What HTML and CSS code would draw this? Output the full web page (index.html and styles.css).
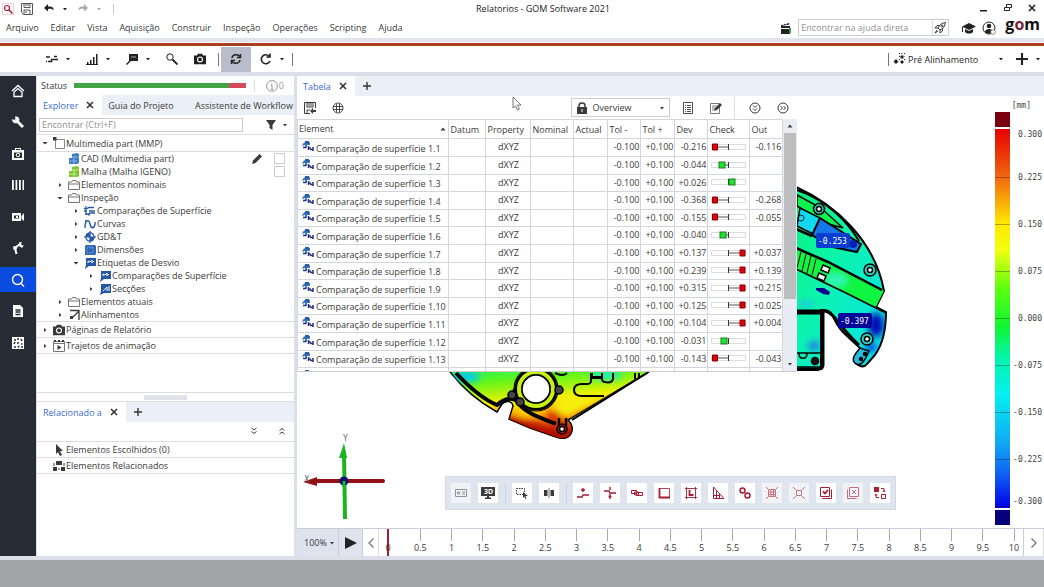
FILE: index.html
```html
<!DOCTYPE html>
<html lang="pt">
<head>
  <meta charset="UTF-8">
  <meta name="viewport" content="width=device-width, initial-scale=1.0">
  <title>Relatorios - GOM Software 2021</title>
  <link rel="stylesheet" href="styles.css">
</head>
<body>
  <!-- Shared icons -->
  <svg class="sprite" aria-hidden="true">
    <symbol id="caret" viewBox="0 0 6 6"><path d="M1 2h4L3 4.6z"/></symbol>
    <symbol id="caret-up" viewBox="0 0 6 6"><path d="M.5 4.5h5L3 1.5z"/></symbol>
    <symbol id="closed" viewBox="0 0 6 6"><path d="M2 1v4l2.500-2z"/></symbol>
    <symbol id="open" viewBox="0 0 6 6"><path d="M.5 2h5L3 4.500z"/></symbol>
    <symbol id="close" viewBox="0 0 8 8"><path d="M1 1l6 6M7 1L1 7" fill="none" stroke="currentColor" stroke-width="1.600"/></symbol>
    <symbol id="plus" viewBox="0 0 8 8"><path d="M4 0v8M0 4h8" fill="none" stroke="currentColor" stroke-width="1.400"/></symbol>
    <symbol id="camera" viewBox="0 0 14 12"><path d="M0 2h3.500l1-2h5l1 2H14v10H0z"/><circle cx="7" cy="6.500" r="2.900" fill="none" stroke="#fff" stroke-width="1.300"/></symbol>
    <symbol id="folder" viewBox="0 0 12 11"><path d="M.5 10V2.500h3l1-1.500H8l.5 1.500h3V10zM1 4.500h10" fill="none" stroke="#777"/></symbol>
    <symbol id="flag" viewBox="0 0 12 12"><path d="M2 1h10v8H5l-4 3 1-4z"/><path d="M4 6V4l2 1 2-2v3l2-2" fill="none" stroke="#fff"/></symbol>
    <symbol id="surf" viewBox="0 0 12 10"><path d="M0 2.500h3l2-1h5M0 5h3M5 5h6M1 8h4l1-1h5" fill="none" stroke="#2457a8" stroke-width="1.300"/><path d="M2 0v9M5 7v3" stroke="#2457a8" fill="none"/></symbol>
    <symbol id="comp" viewBox="0 0 12 11"><path d="M0 5c1-3 2-4 4-4h4v3H5v3H3V4z" fill="#3f79bd"/><path d="M3 0h4v3H3z" fill="#2c5fa6"/><path d="M1 6.500h3M6 7h2l1 1.500h2M6.500 5v4M11 6v4" fill="none" stroke="#25307f" stroke-width="1.500"/></symbol>
    <symbol id="lock" viewBox="0 0 10 12"><path d="M0 5h10v7H0z"/><path d="M2 5V3.500C2 0 8 0 8 3.500V5" fill="none" stroke="currentColor" stroke-width="1.500"/><path d="M5 7v3" stroke="#fff"/></symbol>
    <symbol id="range" viewBox="0 0 35 8"><path d="M.5 1.500h34v5H.5z" fill="#fff" stroke="#ddd"/><path d="M17.500 1v6" stroke="#333"/></symbol>
    <symbol id="low" viewBox="0 0 35 8"><use href="#range"/><path d="M4 4h13.500" stroke="#555"/><path d="M1.500 1h5v6h-5z" fill="#e00010" stroke="#800"/></symbol>
    <symbol id="high" viewBox="0 0 35 8"><use href="#range"/><path d="M17.500 4H30" stroke="#555"/><path d="M29 1h5v6h-5z" fill="#e00010" stroke="#800"/></symbol>
  </svg>

  <header>
    <div class="titlebar">
      <svg class="app-icon" viewBox="0 0 12 12"><path d="M.5.5h11v11H.5z" fill="none" stroke="#e3a3ad" stroke-dasharray="1 1"/><circle cx="5" cy="5" r="2.500" fill="none" stroke="#a61c35" stroke-width="1.200"/><path d="M7 7l3.500 3.500" stroke="#a61c35" stroke-width="1.500"/></svg>
      <button class="icon-btn save" aria-label="Salvar"><svg viewBox="0 0 12 12" fill="none" stroke="currentColor"><path d="M.5.5h11v11h-9l-2-2zM3 .5v4h6v-4M3 11V7h6v4.500M5 8v2M5 1v2M7 1v2"/></svg></button>
      <button class="icon-btn" aria-label="Desfazer"><svg viewBox="0 0 12 12"><path d="M1 5l4-4v2.500c4-.5 6 1 5.500 4C9 5.500 7.500 5.500 5 6v2.500z"/></svg></button>
      <button class="caret-btn" aria-label="Histórico"><svg><use href="#caret"/></svg></button>
      <button class="icon-btn redo" aria-label="Refazer"><svg viewBox="0 0 12 12"><path d="M11 5L7 1v2.500c-4-.5-6 1-5.500 4C3 5.500 4.500 5.500 7 6v2.500z"/></svg></button>
      <button class="caret-btn redo" aria-label="Histórico de refazer"><svg><use href="#caret"/></svg></button>
      <span class="sep"></span>
      <h1>Relatorios - GOM Software 2021</h1>
      <div class="window-btns">
        <button aria-label="Minimizar"><svg viewBox="0 0 8 8"><path d="M0 6h7v1.500H0z"/></svg></button>
        <button aria-label="Restaurar"><svg viewBox="0 0 8 8" fill="none" stroke="currentColor"><path d="M2.500 3V.5h5v3H6M.5 3.500h5v3h-5z"/></svg></button>
        <button aria-label="Fechar"><svg><use href="#close"/></svg></button>
      </div>
    </div>

    <div class="menubar">
      <nav class="menu">
        <a href="#">Arquivo</a>
        <a href="#">Editar</a>
        <a href="#">Vista</a>
        <a href="#">Aquisição</a>
        <a href="#">Construir</a>
        <a href="#">Inspeção</a>
        <a href="#">Operações</a>
        <a href="#">Scripting</a>
        <a href="#">Ajuda</a>
      </nav>
      <button class="icon-btn" aria-label="Novidades"><svg viewBox="0 0 12 12"><path d="M1 4h9v8H1zM1 3l8-2 .5 1.500L1 4z"/><path d="M3 3L4 1.500M6 2.500l1-2M1 6.500h8" stroke="#fff"/><path d="M9 6h2v5H9z" fill="#3c9b4c"/></svg></button>
      <div class="help-search">
        <input type="text" aria-label="Encontrar na ajuda direta" placeholder="Encontrar na ajuda direta">
        <button aria-label="Buscar ajuda"><svg viewBox="0 0 12 12" fill="none" stroke="currentColor"><path d="M4 6c1-3 4-5 7.500-5.500C11 4 9 7 6 8zM4 6H1l2-2.500h2M6 8v3l2.500-2V7M3 8l-2 3 3-2"/><circle cx="8" cy="4" r="1"/></svg></button>
      </div>
      <button class="icon-btn wide" aria-label="Treinamento"><svg viewBox="0 0 14 12"><path d="M7 1l7 3.500L7 8 0 4.500zM3 7l4 2 4-2v3c-2 2-6 2-8 0zM0 5h1v5H0z"/></svg></button>
      <button class="icon-btn user" aria-label="Usuário"><svg viewBox="0 0 14 14"><circle cx="7" cy="7" r="6" fill="none" stroke="currentColor"/><circle cx="7" cy="5" r="2.300"/><path d="M3 11c0-4 8-4 8 0-2 2-6 2-8 0z"/><circle cx="11" cy="11" r="2.300" fill="#fff" stroke="#777" stroke-width=".8"/></svg></button>
      <span class="logo">g<i>o</i>m</span>
    </div>
  </header>

  <div class="toolbar">
    <button class="icon-btn" aria-label="Comparação"><svg viewBox="0 0 12 12" fill="none" stroke="currentColor" stroke-width="1.500"><path d="M0 4h4M2 8.500h3.500V6.500H12M8 3.500h3M0 8.500h1"/></svg></button>
    <button class="caret-btn" aria-label="Mais comparações"><svg><use href="#caret"/></svg></button>
    <button class="icon-btn" aria-label="Diagrama"><svg viewBox="0 0 12 12"><path d="M1 9h1.500v2H1zM4 7h1.500v4H4zM7 4h1.500v7H7zM10 1h1.500v10H10zM0 11h12v1H0z"/></svg></button>
    <button class="caret-btn" aria-label="Mais diagramas"><svg><use href="#caret"/></svg></button>
    <button class="icon-btn" aria-label="Etiqueta"><svg viewBox="0 0 12 12"><path d="M3 1h9v7H5l-4 4-1-1 3-3z"/><path d="M5 4h5" stroke="#aaa"/></svg></button>
    <button class="caret-btn" aria-label="Mais etiquetas"><svg><use href="#caret"/></svg></button>
    <button class="icon-btn" aria-label="Lupa"><svg viewBox="0 0 12 12" fill="none" stroke="currentColor"><circle cx="4" cy="4" r="3.200"/><path d="M6.500 6.500l5 5" stroke-width="1.900"/></svg></button>
    <button class="icon-btn" aria-label="Captura"><svg><use href="#camera"/></svg></button>
    <span class="sep"></span>
    <button class="icon-btn active" aria-label="Recalcular"><svg viewBox="0 0 12 12" fill="none" stroke="currentColor" stroke-width="1.500"><path d="M2 5c.5-3.500 5.500-4.500 8-1.500M10 7c-.5 3.500-5.500 4.500-8 1.500"/><path d="M10.500 1v3.500H7M1.500 11V7.500H5"/></svg></button>
    <button class="icon-btn" aria-label="Recalcular projeto"><svg viewBox="0 0 12 12" fill="none" stroke="currentColor" stroke-width="1.600"><path d="M10 8A4.500 4.500 0 1 1 9 3M10 .5V4H6.500"/></svg></button>
    <button class="caret-btn" aria-label="Mais opções"><svg><use href="#caret"/></svg></button>
    <span class="sep"></span>
    <div class="alignment">
      <span class="sep"></span>
      <svg class="align-icon" viewBox="0 0 12 12"><path d="M3 6l2.500 2.500L3 11 .5 8.500zM9 7l2 2-2 2-2-2zM7.500 2.500h3v3h-3z"/><path d="M6 .5h1M8.500.5h1M11 .5h1M6 3.500h1M11.500 3.500h.5M6 6.500h1M11 6.500h1" stroke="currentColor"/></svg>
      <button class="align-name">Pré Alinhamento <svg><use href="#caret"/></svg></button>
      <button class="icon-btn add" aria-label="Novo alinhamento"><svg><use href="#plus"/></svg></button>
      <button class="caret-btn" aria-label="Mais alinhamentos"><svg><use href="#caret"/></svg></button>
    </div>
  </div>

  <main>
    <nav class="sidebar">
      <a href="#" aria-label="Início"><svg viewBox="0 0 14 14" fill="none" stroke="currentColor" stroke-width="1.300"><path d="M1 7l6-5.500L13 7M3 8l4-3.500L11 8v4.500H3z"/></svg></a>
      <a href="#" aria-label="Configuração"><svg viewBox="0 0 14 14"><path d="M1 4l2 1 1.500-1L4 1.500C8 1 9 4 8 6l5 5-2 2-5-5C3 9 1 7 1 4z"/></svg></a>
      <a href="#" aria-label="Aquisição"><svg viewBox="0 0 14 14"><path d="M1 3h3V1h6v2h3v10H1z"/><path d="M3 5.500h8v5.500H3z" fill="#262c33"/><circle cx="7" cy="8" r="1.800" fill="none" stroke="#fff"/><path d="M5 2.500h4" stroke="#262c33"/></svg></a>
      <a href="#" aria-label="Séries"><svg viewBox="0 0 14 14"><path d="M1 2h1.800v10H1zM4.500 2h1.800v10H4.500zM8 2h1.800v10H8zM11.500 2h1.500v10h-1.500z"/></svg></a>
      <a href="#" aria-label="Vídeo"><svg viewBox="0 0 14 14"><path d="M1 3h9v8H1zM10.500 6L13 3v8l-2.500-2z"/><path d="M3 5.500h5v3H3z" fill="#262c33"/><path d="M5 6h2v2H5z"/></svg></a>
      <a href="#" aria-label="Robô"><svg viewBox="0 0 14 14"><circle cx="4" cy="7" r="2"/><path d="M4 7l5-4M4 7l1.500 6" stroke="currentColor" stroke-width="2"/><path d="M8 1.500l3-.5-1 2 1 1.500 2-.5-2 3-3-2z"/></svg></a>
      <a href="#" class="current" aria-label="Inspeção"><svg viewBox="0 0 14 14" fill="none" stroke="currentColor" stroke-width="1.400"><circle cx="6.500" cy="6.500" r="5"/><path d="M9.500 10l3.500 3.500"/></svg></a>
      <a href="#" aria-label="Relatório"><svg viewBox="0 0 14 14"><path d="M2 1h7l3 3v9H2z"/><path d="M4.500 6h5M4.500 8h5M4.500 10.500h5" stroke="#262c33" stroke-width="1.300"/></svg></a>
      <a href="#" aria-label="Pontos"><svg viewBox="0 0 14 14"><path d="M1 1h12v12H1z"/><path d="M3 4h2M6 3h2M10 3l1 2M3 8l1-2M6 7h2M10 8h1.500M3 11h2M7 10l1 1.500M10 11h2" stroke="#262c33" stroke-width="1.600"/></svg></a>
    </nav>

    <aside class="explorer">
      <div class="status">
        <span>Status</span>
        <span class="progress"></span>
        <span class="messages"><svg viewBox="0 0 12 12" fill="none" stroke="currentColor"><circle cx="6" cy="6" r="5.400"/><path d="M6 5v4.500M4.500 5H6M4.500 9.500h3M6 2.500v1"/></svg>0</span>
      </div>
      <div class="tabs">
        <button class="tab selected">Explorer <svg><use href="#close"/></svg></button>
        <button class="tab">Guia do Projeto</button>
        <button class="tab last">Assistente de Workflow</button>
      </div>
      <div class="find">
        <input type="text" aria-label="Encontrar" placeholder="Encontrar (Ctrl+F)">
        <button aria-label="Filtro"><svg class="funnel" viewBox="0 0 10 10"><path d="M0 0h10L6.500 5v5l-3-2V5z"/></svg><svg><use href="#caret"/></svg></button>
      </div>
      <ul class="tree">
        <li class="root"><svg class="twisty"><use href="#open"/></svg><svg viewBox="0 0 12 12"><path d="M2.500 2.500h9v9h-9z" fill="none" stroke="#888"/><path d="M0 0h3.500v3.500H0z"/></svg>Multimedia part (MMP)</li>
        <li class="l1"><svg class="twisty"></svg><svg viewBox="0 0 12 12"><path d="M4 1l5-1 2 1v9l-2 1H1V5h3z" fill="#3c7cc9"/><path d="M1 8h8M6 3v8M4 4h7" stroke="#84b2e5" fill="none"/></svg>CAD (Multimedia part)
          <svg class="pencil" viewBox="0 0 10 10"><path d="M0 10l1-3.500L7.500 0 10 2.500 3.500 9z"/></svg><input type="checkbox" aria-label="CAD (Multimedia part)"></li>
        <li class="l1"><svg class="twisty"></svg><svg viewBox="0 0 12 12"><path d="M4 1l5-1 2 1v9l-2 1H1V5h3z" fill="#7cc62d"/><path d="M1 8h8M6 3v8M4 4h7" stroke="#c4ee8c" fill="none"/></svg>Malha (Malha IGENO)<input type="checkbox" aria-label="Malha (Malha IGENO)"></li>
        <li class="l1"><svg class="twisty"><use href="#closed"/></svg><svg><use href="#folder"/></svg>Elementos nominais</li>
        <li class="l1"><svg class="twisty"><use href="#open"/></svg><svg><use href="#folder"/></svg>Inspeção</li>
        <li class="l2"><svg class="twisty"><use href="#closed"/></svg><svg><use href="#surf"/></svg>Comparações de Superfície</li>
        <li class="l2"><svg class="twisty"><use href="#closed"/></svg><svg viewBox="0 0 12 12" fill="none" stroke="#2457a8" stroke-width="1.400"><path d="M1 10c0-9 4-9 5-4s4 5 5 0V4M1 3h2"/></svg>Curvas</li>
        <li class="l2"><svg class="twisty"><use href="#closed"/></svg><svg viewBox="0 0 12 12" fill="none" stroke="#2457a8" stroke-width="1.200"><circle cx="6" cy="6" r="4.200"/><path d="M6 0v12M0 6h12"/><path d="M6 2v4H2c0-3 2-4 4-4zM6 10V6h4c0 3-2 4-4 4z" fill="#2457a8" stroke="none"/></svg>GD&amp;T</li>
        <li class="l2"><svg class="twisty"><use href="#closed"/></svg><svg viewBox="0 0 12 12"><path d="M2 1h9l1 1v8l-1 1H1V2z" fill="#2d66b5"/><path d="M3 3h6v6H3zM7 3v2" fill="none" stroke="#5c8fd0"/></svg>Dimensões</li>
        <li class="l2"><svg class="twisty"><use href="#open"/></svg><svg class="blue"><use href="#flag"/></svg>Etiquetas de Desvio</li>
        <li class="l3"><svg class="twisty"><use href="#closed"/></svg><svg class="blue"><use href="#flag"/></svg>Comparações de Superfície</li>
        <li class="l3"><svg class="twisty"><use href="#closed"/></svg><svg class="blue" viewBox="0 0 12 12"><path d="M2 1h10v9H5l-4 2 1-4z"/><path d="M4 8l4-4v4M10 3v5" fill="none" stroke="#fff"/></svg>Secções</li>
        <li class="l1"><svg class="twisty"><use href="#closed"/></svg><svg><use href="#folder"/></svg>Elementos atuais</li>
        <li class="l1"><svg class="twisty"><use href="#closed"/></svg><svg viewBox="0 0 12 12"><path d="M2 1.500h9V11M11 2L5 8" fill="none" stroke="currentColor" stroke-width="1.300"/><path d="M2 7h3v3H2z"/></svg>Alinhamentos</li>
        <li class="group"><svg class="twisty"><use href="#closed"/></svg><svg><use href="#camera"/></svg>Páginas de Relatório</li>
        <li class="group"><svg class="twisty"><use href="#closed"/></svg><svg viewBox="0 0 12 12"><path d="M.5 1.500h11v10H.5zM0 3.500h12" fill="none" stroke="#777"/><path d="M1 0h2v2H1zM5 0h2v2H5zM9 0h2v2H9zM4.500 5l4 2.500-4 2.500z"/></svg>Trajetos de animação</li>
      </ul>
      <div class="splitter"><span></span></div>
      <div class="tabs">
        <button class="tab selected">Relacionado a <svg><use href="#close"/></svg></button>
        <button class="tab-add" aria-label="Nova aba"><svg><use href="#plus"/></svg></button>
      </div>
      <div class="related-tools">
        <button aria-label="Expandir"><svg viewBox="0 0 8 8" fill="none" stroke="currentColor"><path d="M1.500 1L4 3l2.500-2M1.500 4.500L4 6.500l2.500-2"/></svg></button>
        <button aria-label="Recolher"><svg viewBox="0 0 8 8" fill="none" stroke="currentColor"><path d="M1.500 3.500L4 1.500l2.500 2M1.500 7L4 5l2.500 2"/></svg></button>
      </div>
      <ul class="tree related">
        <li class="group"><svg class="twisty"></svg><svg viewBox="0 0 12 12"><path d="M3 0l7 7H7l2 4-2 1-2-4-2 2z"/></svg>Elementos Escolhidos (0)</li>
        <li class="group"><svg class="twisty"></svg><svg viewBox="0 0 12 12"><path d="M3 1h6v4H3zM0 7h4v4H0zM8 7h4v4H8z"/><path d="M1 6V3M11 6V3M5 9h2" stroke="currentColor"/></svg>Elementos Relacionados</li>
      </ul>
    </aside>

    <section class="workspace">
      <div class="tabs">
        <button class="tab selected">Tabela <svg><use href="#close"/></svg></button>
        <button class="tab-add" aria-label="Nova aba"><svg><use href="#plus"/></svg></button>
      </div>

      <div class="viewport">
        <svg class="scene" viewBox="297 96 747 432" preserveAspectRatio="xMinYMin meet">
          <defs>
            <linearGradient id="lower" x1="0" y1="0" x2=".25" y2="1">
              <stop offset="0" stop-color="#00f59c"/>
              <stop offset=".3" stop-color="#5cf51c"/>
              <stop offset=".58" stop-color="#f2f200"/>
              <stop offset=".75" stop-color="#ff9d00"/>
              <stop offset="1" stop-color="#c81400"/>
            </linearGradient>
            <linearGradient id="upper" x1="0" y1="0" x2="1" y2="1">
              <stop offset="0" stop-color="#08ee70"/>
              <stop offset=".45" stop-color="#0cf5a8"/>
              <stop offset="1" stop-color="#05dff5"/>
            </linearGradient>
            <filter id="soft" x="-50%" y="-50%" width="200%" height="200%"><feGaussianBlur stdDeviation="3"/></filter>
            <clipPath id="lowerClip"><path d="M440 360l11 13c14 18 28 29 46 39l5-8c5-4 10-3 11 2l-4 13 21 9 26 9c8 3 14 1 16-6 1-4-1-8-4-11l79-47 20-13z"/></clipPath>
            <clipPath id="upperClip"><path d="M780 180l16 7c38 17 79 53 88 104l-8 16 10 5c0 20-4 33-11 43l-8 9c-4 5-12 1-12-5l6-10-14-13c-11-9-13-19-16-23-2-3-6-3-10-3v55c0 3-2 5-5 5h-26z"/></clipPath>
          </defs>

          <!-- Lower half of the part -->
          <g stroke="#000" fill="none" stroke-width="1.500">
            <path d="M440 360l11 13c14 18 28 29 46 39l5-8c5-4 10-3 11 2l-4 13 21 9 26 9c8 3 14 1 16-6 1-4-1-8-4-11l79-47 20-13z" fill="url(#lower)"/>
            <g clip-path="url(#lowerClip)" stroke="none">
              <g filter="url(#soft)">
                <ellipse cx="466" cy="377" rx="14" ry="5" fill="#00c8f5"/>
                <ellipse cx="606" cy="375" rx="16" ry="5" fill="#12efb6"/>
                <path d="M508 416l64 18-3 10-64-19z" fill="#b01000"/>
                <path d="M546 412l12-2 6 16-16-4z" fill="#d83000"/>
                <path d="M515 408l20-2 10 6-22 4z" fill="#ffe000"/>
                <path d="M562 395l30 0 20-6-44 28-16-8z" fill="#f4ee10"/>
              </g>
            </g>
            <path d="M456 373c14 15 29 27 41 32 7-6 16-9 21-3 4 9 20 15 38 22" stroke-width="4"/>
            <circle cx="536" cy="389" r="22" stroke-width="1.200"/>
            <circle cx="536" cy="389" r="18" stroke-width="7"/>
            <circle cx="536" cy="389" r="17" stroke="#c8ef12" stroke-width="4"/>
            <circle cx="536" cy="389" r="14" fill="#fff"/>
            <path d="M572 420l75-47M604 396h-22c-5 0-8-2-8-6s3-6 8-6h5c4 0 4-2 4-5v-6M602 373v6c0 4 10 5 11 0v-6M592 378h10M635 373v6M639 373v4" stroke-width="2"/>
            <path d="M592 373v4h10v-4M555 373c6 3 10 2 12 0" stroke-width="2"/>
            <g fill="#444"><circle cx="512" cy="395" r="4"/><circle cx="520" cy="402" r="4"/><circle cx="559" cy="390" r="4"/></g>
            <path d="M516 388l-3 4M514 399l3 1" stroke-width="3"/>
            <path d="M559 418v8M566 418v8" stroke-width="2.500"/>
            <circle cx="562" cy="429" r="5" fill="#b21a10"/><circle cx="562" cy="429" r="2.500" fill="#fff"/>
          </g>

          <!-- Upper half of the part -->
          <g stroke="#000" fill="none" stroke-width="1.500">
            <path d="M780 180l16 7c38 17 79 53 88 104l-8 16 10 5c0 20-4 33-11 43l-8 9c-4 5-12 1-12-5l6-10-14-13c-11-9-13-19-16-23-2-3-6-3-10-3v55c0 3-2 5-5 5h-26z" fill="url(#upper)" stroke-width="2"/>
            <g clip-path="url(#upperClip)" stroke="none">
              <path d="M796 248l88 43-8 16-80-39z" fill="#10f542"/>
              <g filter="url(#soft)">
                <ellipse cx="876" cy="325" rx="8" ry="12" fill="#0009b5"/>
                <ellipse cx="871" cy="347" rx="5" ry="5" fill="#003ce0"/>
                <ellipse cx="814" cy="346" rx="6" ry="5" fill="#2280e0"/>
                <ellipse cx="806" cy="304" rx="8" ry="3" fill="#21bde8"/>
                <ellipse cx="836" cy="280" rx="12" ry="8" fill="#2ff5b4"/>
              </g>
            </g>
            <path d="M797 195l24 13 22 20-18-5-28-17z" fill="#0cf34e"/>
            <path d="M797 190c30 10 51 32 62 51" stroke-width="2"/>
            <path d="M800 208l20 10-7 16-16-8z" fill="#13d9ee"/>
            <path d="M820 218l41 26-4 8-24-5-21-12z" fill="#1478ea" stroke-width="2"/>
            <ellipse cx="853" cy="244" rx="4" ry="4" fill="#0420b0" stroke="none"/>
            <path d="M796 229l16 7M796 248l32 14 54 28" stroke-width="2.500"/>
            <path d="M796 269l50 24 40 20" stroke-width="1.500"/>
            <path d="M801 252l-4 16M806 254l-4 17M811 256l-4 17M816 259l-4 16" stroke-width="1"/>
            <path d="M823 265l7 3-2 5-7-3zM819 273l7 3-2 5-7-3z" fill="#fff"/>
            <path d="M816 288h8l6 4-1 3-6-1-7-4z" fill="#00008c" stroke="none"/>
            <path d="M796 313h27v52c0 3-2 4-5 4h-22M796 311h29c10 2 15 17 34 34" stroke-width="3"/>
            <path d="M796 353h25v14h-25zM799 353c0 7 8 7 8 0"/>
            <circle cx="815" cy="361" r="3.500" fill="#111"/>
            <circle cx="801" cy="218" r="3" stroke-width=".8"/>
            <g fill="#26cfc0"><circle cx="819" cy="209" r="5.500"/><circle cx="870" cy="270" r="6"/><circle cx="867" cy="339" r="6"/></g>
            <g fill="#fff"><circle cx="819" cy="209" r="2.500"/><circle cx="870" cy="270" r="2.500"/><circle cx="867" cy="339" r="2.500"/></g>
            <path d="M869 351c-3 7-7 16-13 13-6-4-1-10 4-16z" fill="#20bde0"/>
            <circle cx="861" cy="359" r="1.500" fill="#000"/><circle cx="865" cy="354" r="1.500" fill="#000"/>
          </g>

          <!-- Deviation labels -->
          <g class="labels">
            <rect x="816" y="233" width="34" height="15" rx="2" fill="#0b3ed0"/>
            <text x="818" y="244">-0.253</text>
            <rect x="838" y="313" width="34" height="15" rx="2" fill="#04049a"/>
            <text x="840" y="324">-0.397</text>
          </g>

          <!-- Coordinate axes -->
          <g class="axes">
            <path d="M314 481h69" stroke="#950f18" stroke-width="4" stroke-linecap="round"/>
            <path d="M303 482l14-5v9z" fill="#950f18"/>
            <path d="M344 452l1 67" stroke="#1bb51f" stroke-width="4"/>
            <path d="M344 443l-5 15h8z" fill="#1bb51f"/>
            <circle cx="344" cy="481" r="4.500" fill="#0a0f70"/><path d="M344 481v6" stroke="#1bb51f" stroke-width="3"/>
            <text x="343" y="441">Y</text>
            <text x="304" y="482">X</text>
          </g>
        </svg>

        <div class="legend">
          <span class="unit">[mm]</span>
          <div class="scale">
            <span class="over"></span>
            <span class="ramp"></span>
            <span class="under"></span>
          </div>
          <ol>
            <li>0.300</li><li>0.225</li><li>0.150</li><li>0.075</li><li>0.000</li><li>-0.075</li><li>-0.150</li><li>-0.225</li><li>-0.300</li>
          </ol>
        </div>

        <div class="table-panel">
          <div class="table-tools">
            <button class="icon-btn" aria-label="Exportar tabela"><svg viewBox="0 0 12 12" fill="none" stroke="currentColor"><path d="M11.500 6V.5H.5v11H6M3 .5V5h6V.5M5 1v3M7 1v3M3 11V8h3"/><path d="M6 9l3-3v2h3v2H9v2z" fill="currentColor" stroke="none"/></svg></button>
            <button class="icon-btn globe" aria-label="Idioma"><svg viewBox="0 0 12 12" fill="none" stroke="currentColor" stroke-width=".9"><circle cx="6" cy="6" r="5"/><path d="M1 4.500h10M1 7.500h10M4.500 1.500v9M7.500 1.500v9"/></svg></button>
            <div class="template">
              <svg><use href="#lock"/></svg>
              <select aria-label="Modelo de tabela"><option>Overview</option></select>
              <svg class="drop"><use href="#caret"/></svg>
            </div>
            <button class="icon-btn" aria-label="Lista"><svg viewBox="0 0 12 12" fill="none" stroke="currentColor"><path d="M1.500.5h9v11h-9zM3 3.500h1M5 3.500h4M3 5.500h1M5 5.500h4M3 7.500h1M5 7.500h4M3 9.500h1M5 9.500h4" stroke-width=".9"/></svg></button>
            <button class="icon-btn" aria-label="Editar modelo"><svg viewBox="0 0 12 12"><path d="M.5 1.500h9v10h-9zM2 4h4M2 6h3M2 8h2" fill="none" stroke="#777"/><path d="M4 9l1-3 5-5 2 2-5 5z"/></svg></button>
            <span class="sep"></span>
            <button class="icon-btn" aria-label="Mostrar abaixo"><svg viewBox="0 0 12 12" fill="none" stroke="currentColor"><circle cx="6" cy="6" r="5"/><path d="M4 3.500l2 2 2-2M4 6.500l2 2 2-2"/></svg></button>
            <button class="icon-btn" aria-label="Mostrar mais"><svg viewBox="0 0 12 12" fill="none" stroke="currentColor"><circle cx="6" cy="6" r="5"/><path d="M3.500 4l2 2-2 2M6.500 4l2 2-2 2"/></svg></button>
          </div>
          <div class="table-scroll">
            <table>
              <colgroup>
                <col class="c-element"><col class="c-datum"><col class="c-property"><col class="c-nominal"><col class="c-actual">
                <col class="c-tol"><col class="c-dev"><col class="c-tol"><col class="c-check"><col class="c-out">
              </colgroup>
              <thead>
                <tr><th>Element<svg><use href="#caret-up"/></svg></th><th>Datum</th><th>Property</th><th>Nominal</th><th>Actual</th><th>Tol -</th><th>Tol +</th><th>Dev</th><th>Check</th><th>Out</th></tr>
              </thead>
              <tbody>
                <tr><td><svg><use href="#comp"/></svg>Comparação de superfície 1.1</td><td></td><td>dXYZ</td><td></td><td></td><td>-0.100</td><td>+0.100</td><td>-0.216</td><td><svg><use href="#low"/></svg></td><td>-0.116</td></tr>
                <tr><td><svg><use href="#comp"/></svg>Comparação de superfície 1.2</td><td></td><td>dXYZ</td><td></td><td></td><td>-0.100</td><td>+0.100</td><td>-0.044</td><td><svg><use href="#range"/><path d="M14 4h3" stroke="#555"/><rect x="8" y="1" width="6" height="6"/></svg></td><td></td></tr>
                <tr><td><svg><use href="#comp"/></svg>Comparação de superfície 1.3</td><td></td><td>dXYZ</td><td></td><td></td><td>-0.100</td><td>+0.100</td><td>+0.026</td><td><svg><use href="#range"/><rect x="18" y="1" width="6" height="6"/></svg></td><td></td></tr>
                <tr><td><svg><use href="#comp"/></svg>Comparação de superfície 1.4</td><td></td><td>dXYZ</td><td></td><td></td><td>-0.100</td><td>+0.100</td><td>-0.368</td><td><svg><use href="#low"/></svg></td><td>-0.268</td></tr>
                <tr><td><svg><use href="#comp"/></svg>Comparação de superfície 1.5</td><td></td><td>dXYZ</td><td></td><td></td><td>-0.100</td><td>+0.100</td><td>-0.155</td><td><svg><use href="#low"/></svg></td><td>-0.055</td></tr>
                <tr><td><svg><use href="#comp"/></svg>Comparação de superfície 1.6</td><td></td><td>dXYZ</td><td></td><td></td><td>-0.100</td><td>+0.100</td><td>-0.040</td><td><svg><use href="#range"/><path d="M14 4h3" stroke="#555"/><rect x="9" y="1" width="6" height="6"/></svg></td><td></td></tr>
                <tr><td><svg><use href="#comp"/></svg>Comparação de superfície 1.7</td><td></td><td>dXYZ</td><td></td><td></td><td>-0.100</td><td>+0.100</td><td>+0.137</td><td><svg><use href="#high"/></svg></td><td>+0.037</td></tr>
                <tr><td><svg><use href="#comp"/></svg>Comparação de superfície 1.8</td><td></td><td>dXYZ</td><td></td><td></td><td>-0.100</td><td>+0.100</td><td>+0.239</td><td><svg><use href="#high"/></svg></td><td>+0.139</td></tr>
                <tr><td><svg><use href="#comp"/></svg>Comparação de superfície 1.9</td><td></td><td>dXYZ</td><td></td><td></td><td>-0.100</td><td>+0.100</td><td>+0.315</td><td><svg><use href="#high"/></svg></td><td>+0.215</td></tr>
                <tr><td><svg><use href="#comp"/></svg>Comparação de superfície 1.10</td><td></td><td>dXYZ</td><td></td><td></td><td>-0.100</td><td>+0.100</td><td>+0.125</td><td><svg><use href="#high"/></svg></td><td>+0.025</td></tr>
                <tr><td><svg><use href="#comp"/></svg>Comparação de superfície 1.11</td><td></td><td>dXYZ</td><td></td><td></td><td>-0.100</td><td>+0.100</td><td>+0.104</td><td><svg><use href="#high"/></svg></td><td>+0.004</td></tr>
                <tr><td><svg><use href="#comp"/></svg>Comparação de superfície 1.12</td><td></td><td>dXYZ</td><td></td><td></td><td>-0.100</td><td>+0.100</td><td>-0.031</td><td><svg><use href="#range"/><rect x="10" y="1" width="6" height="6"/></svg></td><td></td></tr>
                <tr><td><svg><use href="#comp"/></svg>Comparação de superfície 1.13</td><td></td><td>dXYZ</td><td></td><td></td><td>-0.100</td><td>+0.100</td><td>-0.143</td><td><svg><use href="#low"/></svg></td><td>-0.043</td></tr>
                <tr><td><svg><use href="#comp"/></svg>Comparação de superfície 1.14</td><td></td><td>dXYZ</td><td></td><td></td><td>-0.100</td><td>+0.100</td><td>-0.202</td><td><svg><use href="#low"/></svg></td><td>-0.102</td></tr>
              </tbody>
            </table>
            <div class="scrollbar">
              <svg><use href="#caret-up"/></svg>
              <span class="thumb"></span>
              <svg><use href="#caret"/></svg>
            </div>
          </div>
        </div>

        <div class="view-tools">
          <div class="tool-group">
            <button disabled aria-label="Etiqueta de valor"><svg viewBox="0 0 12 12" fill="none" stroke="#555"><path d="M.5 2.500h11v7H.5zM2.500 5h2v2h-2zM7 5h3M7 7h3"/></svg></button>
            <button aria-label="Vista 3D"><svg viewBox="0 0 14 12" class="monitor"><path d="M0 0h14v9H8v1.500h2V12H4v-1.500h2V9H0z"/><text x="3" y="7">3D</text></svg></button>
          </div>
          <div class="tool-group">
            <button aria-label="Selecionar"><svg viewBox="0 0 12 12"><path d="M.5 1.500h8v6h-8z" fill="none" stroke="currentColor" stroke-dasharray="1.500 1"/><path d="M7 5l5 4H9.500l1 2.500-1 .5-1-2.500L7 11z"/></svg></button>
            <button aria-label="Espelhar"><svg viewBox="0 0 12 12"><path d="M1 3h3.500v6H1zM7.500 3H11v6H7.500z"/><path d="M6 1v10" stroke="#777"/></svg></button>
          </div>
          <div class="tool-group red">
            <button aria-label="Desvio de ponto"><svg viewBox="0 0 12 12" fill="none" stroke="currentColor" stroke-width="1.400"><path d="M0 10h5l1-2h6M6 1v4M4 3h4"/></svg></button>
            <button aria-label="Desvio duplo"><svg viewBox="0 0 12 12" fill="none" stroke="currentColor" stroke-width="1.400"><path d="M0 4h5l1 2h6M6 0v3M6 7v5M4.500 9.500h3"/></svg></button>
            <button aria-label="Etiquetas"><svg viewBox="0 0 12 12" fill="none" stroke="currentColor"><path d="M.5 3.500h5v3h-5zM5.500 5.500h6v3h-6zM3.500 5h4v3h-4z"/></svg></button>
            <button aria-label="Moldura"><svg viewBox="0 0 12 12" fill="none" stroke="currentColor"><path d="M1.500 1v9.500H12" stroke-width="1.800"/><path d="M1 1.500h10.500V11" stroke-width=".8"/></svg></button>
            <button aria-label="Eixos"><svg viewBox="0 0 12 12" fill="none" stroke="currentColor"><path d="M1.500 0v12M10.500 0v12M0 1.500h12M0 10.500h12" stroke-width=".9"/><path d="M4.500 3v5h4" stroke-width="1.800"/></svg></button>
            <button aria-label="Ângulo"><svg viewBox="0 0 12 12" fill="none" stroke="currentColor"><path d="M1.500 0v11.500H12zM4.500 4v7M7.500 7v4M1 8.500h7"/></svg></button>
            <button aria-label="Círculos"><svg viewBox="0 0 12 12" fill="none" stroke="currentColor" stroke-width="1.500"><circle cx="3.500" cy="3.500" r="2.500"/><circle cx="8.500" cy="8.500" r="2.500"/></svg></button>
            <button disabled aria-label="Grade"><svg viewBox="0 0 12 12" fill="none" stroke="currentColor"><path d="M0 0l2 2M12 0l-2 2M0 12l2-2M12 12l-2-2M2.500 2.500h7v7h-7zM5 2v8M7.500 2v8M2 5h8M2 7.500h8"/></svg></button>
            <button disabled aria-label="Ajustar"><svg viewBox="0 0 12 12" fill="none" stroke="currentColor"><path d="M0 0l3 3M12 0L9 3M0 12l3-3M12 12L9 9M3.500 3.500h5v5h-5z"/></svg></button>
            <button aria-label="Aceitar"><svg viewBox="0 0 12 12" fill="none" stroke="currentColor"><path d="M.5.500h9v9h-9zM2.500 11.500h9v-9"/><path d="M3 4.500l2 2L8 3" stroke-width="1.800"/></svg></button>
            <button disabled aria-label="Rejeitar"><svg viewBox="0 0 12 12" fill="none" stroke="currentColor"><path d="M2.500.5h9v9h-9zM.5 2.500v9h9M5 3l4 4M9 3L5 7"/></svg></button>
            <button aria-label="Trocar"><svg viewBox="0 0 12 12"><path d="M0 0h5v5H0z"/><path d="M7.500 7.500h4v4h-4zM7 1.500h3V5M9 3.500L10 5l1-1.500M5 10.500H2V7M1 8.500L2 7l1 1.500" fill="none" stroke="currentColor"/></svg></button>
          </div>
        </div>

        <svg class="pointer" viewBox="0 0 10 15"><path d="M1 1v11l2.500-2L5.500 14l2-1-2-4H9z" fill="#fff" stroke="#777"/></svg>
      </div>

      <div class="timeline">
        <div class="zoom">
          <select aria-label="Zoom"><option>100%</option></select>
          <svg><use href="#caret"/></svg>
        </div>
        <button class="play" aria-label="Reproduzir"><svg viewBox="0 0 12 12"><path d="M0 0l12 6-12 6z"/></svg></button>
        <button class="step" aria-label="Anterior"><svg viewBox="0 0 8 12" fill="none" stroke="currentColor" stroke-width="1.300"><path d="M6.500 1.500L2 6l4.500 4.500"/></svg></button>
        <ol class="ruler">
          <li class="now">0</li><li>0.5</li><li>1</li><li>1.5</li><li>2</li><li>2.5</li><li>3</li><li>3.5</li><li>4</li><li>4.5</li><li>5</li><li>5.5</li><li>6</li><li>6.5</li><li>7</li><li>7.5</li><li>8</li><li>8.5</li><li>9</li><li>9.5</li><li>10</li>
        </ol>
        <button class="step next" aria-label="Próximo"><svg viewBox="0 0 8 12" fill="none" stroke="currentColor" stroke-width="1.300"><path d="M1.500 1.500L6 6l-4.500 4.500"/></svg></button>
      </div>
    </section>
  </main>

  <footer></footer>
</body>
</html>
```
FILE: styles.css
```css
* {
  box-sizing: border-box;
}
body {
  margin: 0;
  min-height: 100vh;
  display: flex;
  flex-direction: column;
  font-family: "Open Sans", "Noto Sans", sans-serif;
  font-size: 9px;
  line-height: 13px;
  color: #3a3a3a;
  background-color: #fff;
}
button, input, select {
  font: inherit;
  color: inherit;
  margin: 0;
  padding: 0;
  border: none;
  background: none;
}
button {
  cursor: pointer;
}
a {
  color: inherit;
  text-decoration: none;
}
ul, ol {
  list-style: none;
  margin: 0;
  padding: 0;
}
svg {
  width: 12px;
  height: 12px;
  flex: none;
}
svg:not([fill]) {
  fill: currentColor;
}
.sprite {
  position: absolute;
  width: 0;
  height: 0;
}

/* Buttons shared by the bars */
.icon-btn, .caret-btn {
  display: flex;
  align-items: center;
  justify-content: center;
  width: 20px;
  flex: none;
}
.caret-btn {
  width: 12px;
}
.caret-btn svg {
  width: 6px;
  height: 6px;
}
.sep {
  width: 1px;
  height: 13px;
  background-color: #777;
  flex: none;
}

/* Title and menu */
.titlebar {
  display: flex;
  align-items: center;
  height: 17px;
  padding-left: 2px;
  color: #222;
}
.titlebar .save {
  margin: 0 2px 0 3px;
  color: #555;
}
.titlebar .redo {
  color: #aaa;
}
.titlebar .caret-btn {
  margin-right: 2px;
}
.titlebar .redo + .sep {
  margin-left: 6px;
}
.titlebar .sep {
  height: 10px;
  background-color: #ccc;
}
h1 {
  flex: 1;
  margin: 0;
  text-align: center;
  font-size: 9px;
  font-weight: normal;
}
.window-btns {
  display: flex;
}
.window-btns button {
  width: 24px;
}
.window-btns svg {
  width: 8px;
  height: 8px;
}
.menubar {
  display: flex;
  align-items: center;
  height: 21px;
  padding: 0 4px 0 6px;
}
.menu {
  display: flex;
  gap: 12px;
  margin-right: auto;
}
.menubar .icon-btn {
  color: #222;
}
.help-search {
  display: flex;
  width: 151px;
  height: 17px;
  margin: 0 10px 0 2px;
  border: 1px solid #ccc;
}
.help-search input {
  flex: 1;
  min-width: 0;
  padding-left: 2px;
}
.help-search button {
  display: flex;
  align-items: center;
  width: 16px;
  padding-left: 1px;
  border-left: 1px solid #ddd;
}
::placeholder {
  color: #909090;
  opacity: 1;
}
.wide svg, .user svg {
  width: 14px;
  height: 14px;
}
.logo {
  margin-left: 6px;
  font-size: 16px;
  font-weight: bold;
  line-height: 16px;
  color: #111;
  padding-bottom: 8px;
}
.logo i {
  font-style: normal;
  color: #7d1c33;
}

/* Main toolbar */
.toolbar {
  display: flex;
  align-items: center;
  height: 38px;
  padding-left: 42px;
  border-top: 4px solid #e0e2ec;
  border-bottom: 4px solid #dcdfea;
  background: linear-gradient(#fff 1px, #a8401f 1px, #a8401f 4px, #fff 4px);
  padding-top: 4px;
  color: #222;
}
.toolbar .caret-btn + .icon-btn,
.toolbar .icon-btn + .icon-btn {
  margin-left: 8px;
}
.toolbar .icon-btn + .sep {
  margin: 0 2px 0 8px;
}
.toolbar .active {
  width: 30px;
  height: 25px;
  background-color: #b9bdcb;
}
.toolbar .active + .icon-btn {
  margin-left: 5px;
}
.toolbar .caret-btn + .sep {
  margin-left: 4px;
}
.alignment {
  display: flex;
  align-items: center;
  margin-left: auto;
}
.align-icon {
  margin: 0 3px 0 4px;
}
.align-name {
  display: flex;
  align-items: center;
  justify-content: space-between;
  width: 96px;
}
.align-name svg {
  width: 6px;
  height: 6px;
}
.alignment .icon-btn.add {
  margin-left: 8px;
}

/* Workspace layout */
main {
  flex: 1;
  display: grid;
  grid-template-columns: 36px 258px minmax(0, 1fr);
  border-bottom: 4px solid #dcdfea;
}
.sidebar {
  display: flex;
  flex-direction: column;
  gap: 6px;
  padding-top: 2px;
  background-color: #262c33;
  color: #fff;
}
.sidebar a {
  display: flex;
  align-items: center;
  justify-content: center;
  height: 25px;
}
.sidebar a:nth-child(even) {
  height: 26px;
}
.sidebar svg {
  width: 14px;
  height: 14px;
}
.sidebar .current {
  background-color: #0b4be0;
}

/* Explorer */
.explorer {
  display: flex;
  flex-direction: column;
  border-left: 1px solid #ddd;
}
.status {
  display: flex;
  align-items: center;
  height: 19px;
  padding: 0 10px 0 4px;
}
.progress {
  flex: 1;
  height: 5px;
  margin: 0 8px 0 7px;
  background: linear-gradient(90deg, #43a447 90%, #d64b5b 90%);
}
.messages {
  display: flex;
  align-items: center;
  gap: 1px;
  padding-left: 11px;
  border-left: 1px solid #ddd;
  color: #999;
}
.tabs {
  display: flex;
  height: 20px;
  background-color: #eaf0f5;
}
.tab {
  display: flex;
  align-items: center;
  gap: 8px;
  padding: 0 8px 0 6px;
  white-space: nowrap;
}
.tab.selected {
  background-color: #fff;
  color: #3c6bd0;
}
.tab svg {
  width: 8px;
  height: 8px;
  color: #333;
}
.tab-add {
  display: flex;
  align-items: center;
  padding-left: 8px;
  color: #333;
}
.tab-add svg {
  width: 8px;
  height: 8px;
}
.tab.last {
  padding: 0;
  margin-left: auto;
  margin-right: 1px;
}
.find {
  display: flex;
  align-items: center;
  height: 19px;
  padding: 0 6px 0 2px;
}
.find input {
  flex: 1;
  height: 14px;
  padding-left: 2px;
  border: 1px solid #ccc;
}
.find button {
  display: flex;
  align-items: center;
  gap: 6px;
  margin-left: 23px;
}
.find svg {
  width: 6px;
  height: 6px;
}
.find .funnel {
  width: 10px;
  height: 10px;
}
.tree {
  flex: 1;
}
.tree li {
  display: flex;
  align-items: center;
  gap: 1px;
  height: 13px;
  padding-left: 3px;
  padding-right: 9px;
}
.tree .twisty {
  width: 6px;
  height: 6px;
  margin: 0 4px 0 2px;
}
.tree li.root {
  height: 18px;
  border-top: 1px solid #ddd;
  border-bottom: 1px solid #ddd;
}
.tree li.l1 {
  padding-left: 18px;
}
.tree li.l2 {
  padding-left: 34px;
}
.tree li.l3 {
  padding-left: 49px;
}
.tree li.group {
  height: 16px;
  border-bottom: 1px solid #ddd;
}
.tree .l1 + .group {
  height: 17px;
  border-top: 1px solid #ddd;
}
.tree .blue {
  color: #2457a8;
}
.tree .pencil {
  width: 10px;
  height: 10px;
  margin-left: auto;
}
.tree input {
  appearance: none;
  width: 11px;
  height: 11px;
  border: 1px solid #ccc;
  margin-left: auto;
}
.tree .pencil + input {
  margin-left: 11px;
}
.splitter {
  display: flex;
  justify-content: center;
  align-items: center;
  height: 10px;
  border-top: 1px solid #ddd;
  border-bottom: 1px solid #ddd;
}
.splitter span {
  width: 43px;
  height: 5px;
  background-color: #e0e4ea;
}
.related-tools {
  display: flex;
  justify-content: flex-end;
  gap: 20px;
  padding-right: 8px;
  height: 19px;
}
.related-tools svg {
  width: 8px;
  height: 8px;
}
.related {
  flex: none;
  height: 115px;
  border-top: 1px solid #ddd;
}

/* Table and 3D view */
.workspace {
  display: flex;
  flex-direction: column;
  border-left: 3px solid #dcdfea;
}
.viewport {
  position: relative;
  flex: 1;
}
.scene {
  position: absolute;
  inset: 0;
  width: 100%;
  height: 100%;
}
.labels text {
  font: 8px "DejaVu Sans Mono", monospace;
  fill: #fff;
}
.axes text {
  font: 8px "DejaVu Sans", sans-serif;
  fill: #666;
}
.table-panel {
  position: absolute;
  top: 0;
  left: 0;
  width: 67%;
  height: 64%;
  display: flex;
  flex-direction: column;
  background-color: #fff;
  border-bottom: 1px solid #ccc;
}
.table-tools {
  display: flex;
  align-items: center;
  height: 23px;
  flex: none;
  padding: 0 4px 0 3px;
}
.table-tools .globe {
  margin: 0 auto 0 8px;
}
.table-tools .icon-btn + .icon-btn:not(.globe) {
  margin-left: 8px;
}
.table-tools .sep {
  height: 22px;
  margin: 0 10px 0 8px;
  background-color: #ddd;
}
.template {
  display: flex;
  align-items: center;
  width: 99px;
  height: 19px;
  margin-right: 8px;
  padding: 0 4px;
  border: 1px solid #ccc;
}
.template select {
  flex: 1;
  appearance: none;
  padding-left: 4px;
}
.template .drop {
  width: 6px;
  height: 6px;
}
.table-scroll {
  display: flex;
  flex: 1;
  min-height: 0;
  overflow: hidden;
}
table {
  flex: 1;
  width: 0;
  table-layout: fixed;
  border-collapse: collapse;
  align-self: flex-start;
}
.c-datum {
  width: 37px;
}
.c-property {
  width: 45px;
}
.c-nominal {
  width: 43px;
}
.c-actual {
  width: 34px;
}
.c-tol {
  width: 33px;
}
.c-dev {
  width: 34px;
}
.c-check {
  width: 42px;
}
.c-out {
  width: 33px;
}
th, td {
  padding: 0 1px;
  border: 1px solid #d3d5e0;
  white-space: nowrap;
  text-align: right;
}
th {
  height: 19px;
  font-weight: normal;
  text-align: left;
}
th svg {
  float: right;
  width: 6px;
  height: 6px;
  margin: 4px 1px;
}
tbody tr {
  height: 18px;
}
tbody tr:nth-child(5n+3), tbody tr:nth-child(5n) {
  height: 17px;
}
td {
  padding-bottom: 2px;
}
td:first-child {
  text-align: left;
  padding: 0 0 0 4px;
}
td:first-child svg {
  height: 11px;
  margin-right: 2px;
}
td:nth-child(3) {
  text-align: center;
}
td:nth-child(9) svg {
  display: block;
  width: 35px;
  height: 8px;
  margin: 0 2px;
}
td rect {
  fill: #1ee62e;
  stroke: #1a7a20;
}
.scrollbar {
  width: 14px;
  display: flex;
  flex-direction: column;
  align-items: center;
  background-color: #e9ecf2;
  padding: 4px 0;
}
.scrollbar svg {
  width: 6px;
  height: 6px;
}
.thumb {
  width: 12px;
  height: 68%;
  margin: 4px 0 auto;
  background-color: #bdbdbf;
}

/* Colour legend */
.legend {
  position: absolute;
  top: 4px;
  right: 2px;
  display: grid;
  grid-template-columns: 15px 29px;
  column-gap: 3px;
  font: 8px/12px "DejaVu Sans Mono", monospace;
  color: #444;
}
.unit {
  grid-column: 1 / 3;
  text-align: right;
  padding-right: 11px;
}
.scale {
  display: flex;
  flex-direction: column;
  gap: 2px;
}
.over, .under {
  height: 15px;
  background-color: #7b0010;
}
.under {
  background-color: #06007a;
}
.ramp {
  height: 379px;
  background:
    repeating-linear-gradient(transparent 0, transparent 46px, rgba(0, 0, 0, 0.3) 46px, rgba(0, 0, 0, 0.3) 47px) 0 2px,
    linear-gradient(#e60000, #f26a10 13%, #ffe900 25%, #f2ff10 32%, #5cff10 42%, #10f530 52%, #05f5a8 60%, #05f0f0 70%, #10a8f5 83%, #1060f5 91%, #0000e8);
}
.legend ol {
  margin-top: 17px;
  text-align: right;
}
.legend li {
  display: flex;
  align-items: center;
  justify-content: flex-end;
  height: 47px;
}
.legend li:first-child {
  height: 25px;
  align-items: flex-start;
}
.legend li:last-child {
  height: 25px;
  align-items: flex-end;
}

/* Inspection tools over the view */
.view-tools {
  position: absolute;
  left: 0;
  right: 0;
  bottom: 18px;
  width: fit-content;
  margin: 0 auto;
  display: flex;
  padding: 6px 5px;
  border: 1px solid #d3dae6;
  background-color: #dfe5ee;
}
.tool-group {
  display: flex;
  gap: 7px;
}
.tool-group + .tool-group {
  margin-left: 7px;
  padding-left: 6px;
  border-left: 1px solid #cdd3de;
}
.tool-group button {
  display: flex;
  align-items: center;
  justify-content: center;
  width: 20px;
  height: 20px;
  background-color: #fff;
}
.tool-group button:disabled {
  background-color: #f0f2f6;
}
.tool-group button:disabled svg {
  opacity: 0.6;
}
.tool-group.red {
  color: #a61c35;
}
.tool-group.red button:disabled {
  color: #a61c35;
}
.monitor {
  width: 14px;
}
.monitor text {
  font: bold 7px "Noto Sans", sans-serif;
  fill: #fff;
}
.pointer {
  position: absolute;
  top: 0;
  left: 215px;
  width: 10px;
  height: 15px;
}

/* Timeline */
.timeline {
  display: flex;
  height: 28px;
  border-top: 1px solid #c9cddb;
}
.zoom {
  display: flex;
  align-items: center;
  width: 41px;
  padding: 0 3px 0 7px;
  background-color: #dfe3ee;
}
.zoom select {
  flex: 1;
  appearance: none;
}
.zoom svg {
  width: 6px;
  height: 6px;
}
.play, .step {
  display: flex;
  align-items: center;
  justify-content: center;
  width: 24px;
  border-left: 1px solid #c9cddb;
  background-color: #dfe3ee;
  color: #222;
}
.step {
  width: 17px;
  background-color: #fff;
  border-right: 1px solid #ddd;
  color: #777;
}
.step svg {
  width: 8px;
}
.step.next {
  width: 21px;
}
.ruler {
  flex: 1;
  display: flex;
  justify-content: space-between;
  padding: 0 9px 0 8px;
}
.ruler li {
  width: 0;
  display: flex;
  flex-direction: column;
  align-items: center;
}
.ruler li::before {
  content: "";
  flex: none;
  width: 1px;
  height: 12px;
  background-color: #aaa;
}
.ruler .now {
  background-color: #9c2030;
  width: 2px;
}
.ruler .now::before {
  background-color: #9c2030;
}

footer {
  height: 27px;
  background-color: #a1a3a5;
}
```
